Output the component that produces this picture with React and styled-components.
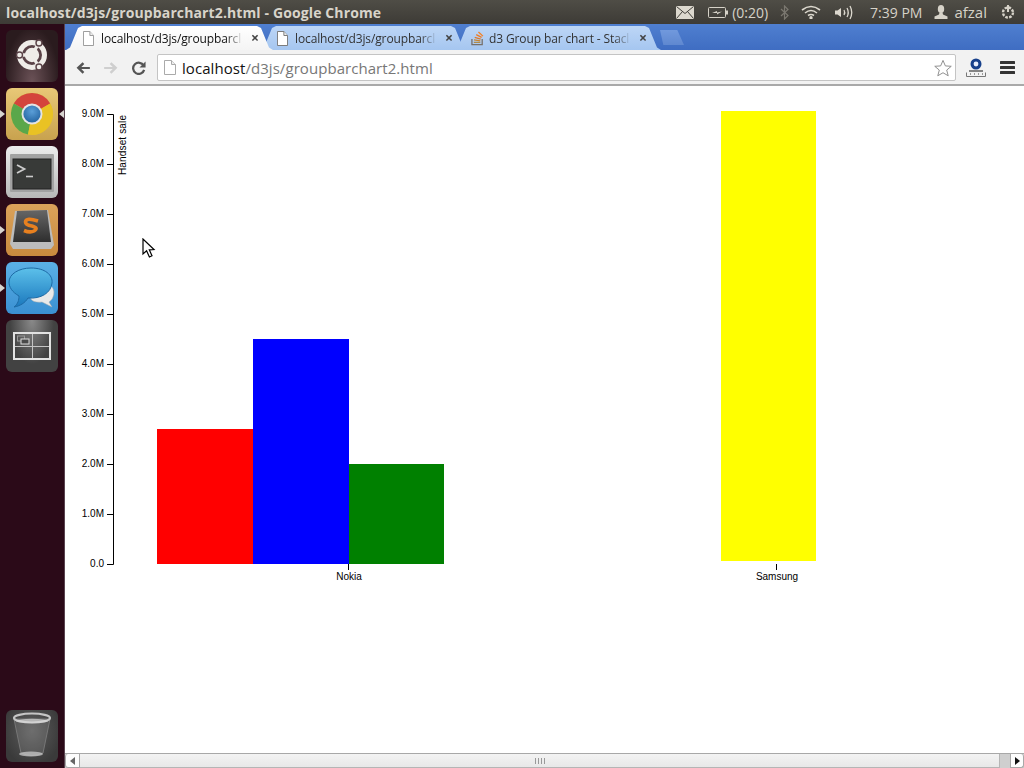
import React from 'react';
import styled, { createGlobalStyle } from 'styled-components';

const GlobalStyle = createGlobalStyle`
    html, body { margin: 0; padding: 0; overflow: hidden; background: #fff; }
    #root { width: 1024px; height: 768px; }
`;

const uiFont = `"Open Sans", "Noto Sans", "DejaVu Sans", sans-serif`;

const Desktop = styled.div`
    width: 1024px;
    height: 768px;
    display: flex;
    flex-direction: column;
    overflow: hidden;
    font-family: ${uiFont};
`;

const TopBar = styled.div`
    height: 24px;
    flex: none;
    display: flex;
    align-items: center;
    padding-left: 6px;
    background: linear-gradient(#4f4d46, #3d3b36);
    color: #dfdbd2;
`;

const WindowTitle = styled.div`
    font-size: 14px;
    font-weight: 700;
    letter-spacing: 0.12px;
    white-space: nowrap;
    color: #d8d4ca;
`;

const Indicators = styled.div`
    margin-left: auto;
    display: flex;
    align-items: center;
    height: 24px;
`;

const Indicator = styled.span`
    display: flex;
    align-items: center;
    margin-left: ${p => p.$gap}px;
    font-size: ${p => p.$size || 15}px;
    color: #d6d2c8;
    white-space: nowrap;
`;

const Main = styled.div`
    flex: 1;
    display: flex;
    min-height: 0;
`;

const Launcher = styled.div`
    width: 65px;
    flex: none;
    display: flex;
    flex-direction: column;
    gap: 6px;
    padding: 6px 0 6px 6px;
    box-sizing: border-box;
    background: #2b0a18;
    border-right: 1px solid #5a4450;
`;

const Tile = styled.div`
    position: relative;
    width: 52px;
    height: 52px;
    border-radius: 6px;
    background: ${p => p.$bg};
    margin-top: ${p => p.$push ? 'auto' : '0'};
    svg { display: block; }
`;

const Pip = styled.span`
    position: absolute;
    top: 22px;
    width: 0;
    height: 0;
    border-top: 4px solid transparent;
    border-bottom: 4px solid transparent;
    ${p => p.$right
        ? `left: 53px; border-right: 5px solid #d8d4d0;`
        : `left: -6px; border-left: 5px solid #d8d4d0;`}
`;

const Browser = styled.div`
    flex: 1;
    display: flex;
    flex-direction: column;
    min-width: 0;
`;

const TabStrip = styled.div`
    height: 26px;
    flex: none;
    display: flex;
    align-items: flex-end;
    padding-left: 1px;
    background: linear-gradient(#4f7fd0, #3f6dc2);
    filter: drop-shadow(0 0 0.6px #24457f);
`;

const Tab = styled.div`
    width: 207px;
    height: 24px;
    margin-right: -13px;
    flex: none;
    display: flex;
    align-items: center;
    box-sizing: border-box;
    padding: 0 14px 0 17px;
    font-size: 12px;
    position: relative;
    z-index: ${p => p.$active ? 2 : 1};
    color: ${p => p.$active ? '#111' : '#333'};
    background: ${p => p.$active
        ? 'linear-gradient(#ffffff, #f4f4f4)'
        : 'linear-gradient(#bdd6f6, #a5c6f0)'};
    clip-path: polygon(0 100%, 4px 90%, 12px 8%, 16px 0, calc(100% - 16px) 0, calc(100% - 12px) 8%, calc(100% - 4px) 90%, 100% 100%);
`;

const TabLabel = styled.span`
    flex: 1;
    min-width: 0;
    margin-left: ${p => p.$gap}px;
    letter-spacing: -0.12px;
    white-space: nowrap;
    overflow: hidden;
    mask-image: linear-gradient(to right, #000 88%, transparent);
`;

const TabClose = styled.span`
    flex: none;
    margin-left: 8px;
    font-size: 14px;
    font-weight: 700;
    line-height: 1;
    color: #444;
`;

const NewTab = styled.div`
    width: 24px;
    height: 15px;
    margin: 0 0 5px 12px;
    flex: none;
    background: linear-gradient(#7199dd, #5f88d0);
    clip-path: polygon(0 0, 72% 0, 100% 100%, 14% 100%);
`;

const Toolbar = styled.div`
    height: 36px;
    flex: none;
    display: flex;
    align-items: center;
    box-sizing: border-box;
    background: #f2f2f2;
    border-bottom: 2px solid #a9a9a9;
    padding: 1px 0 0 4px;
`;

const NavButton = styled.span`
    width: 28px;
    height: 24px;
    flex: none;
    display: flex;
    align-items: center;
    justify-content: center;
`;

const Omnibox = styled.div`
    width: 799px;
    height: 27px;
    margin-left: 4px;
    flex: none;
    display: flex;
    align-items: center;
    box-sizing: border-box;
    padding: 0 3px 0 6px;
    background: #fff;
    border: 1px solid #c4c4c4;
    border-radius: 2px;
    font-size: 15px;
    letter-spacing: 0.06px;
    white-space: nowrap;
    color: #777;
`;

const Host = styled.span`
    color: #111;
    margin-left: 6px;
`;

const StarSlot = styled.span`
    margin-left: auto;
    display: flex;
`;

const ToolButton = styled.span`
    display: flex;
    margin-left: ${p => p.$gap}px;
`;

const Page = styled.div`
    flex: 1;
    background: #fff;
    position: relative;
    min-height: 0;
`;

const Chart = styled.svg`
    display: block;
    width: 959px;
    height: 667px;
    text {
        font-family: "Liberation Sans", Arial, sans-serif;
        font-size: 10px;
        fill: #000;
    }
`;

const Pointer = styled.svg`
    position: absolute;
    left: 77px;
    top: 152px;
`;

const Scrollbar = styled.div`
    height: 15px;
    flex: none;
    display: flex;
    box-sizing: border-box;
    background: #cfcfcf;
    border-top: 1px solid #a8a8a8;
`;

const ScrollButton = styled.div`
    width: ${p => p.$right ? 14 : 15}px;
    flex: none;
    display: flex;
    align-items: center;
    justify-content: center;
    background: #fdfdfd;
    border: 1px solid #a8a8a8;
    border-top: 0;
    box-sizing: border-box;
    border-radius: ${p => p.$right ? '0 3px 3px 0' : '3px 0 0 3px'};
`;

const Arrow = styled.span`
    width: 0;
    height: 0;
    border-top: 4px solid transparent;
    border-bottom: 4px solid transparent;
    ${p => p.$right ? 'border-left: 5px solid #111;' : 'border-right: 5px solid #666;'}
`;

const Thumb = styled.div`
    width: 920px;
    flex: none;
    display: flex;
    align-items: center;
    justify-content: center;
    gap: 2px;
    box-sizing: border-box;
    background: linear-gradient(#f3f3f3, #e8e8e8);
    border-right: 1px solid #b5b5b5;
    border-bottom: 1px solid #b5b5b5;
`;

const Grip = styled.i`
    width: 1px;
    height: 6px;
    background: #999;
`;

const Track = styled.div`
    flex: 1;
    background: #cfcfcf;
`;

const MailIcon = () => (
    <svg width="18" height="13" viewBox="0 0 18 13" fill="none" stroke="#3f3d38">
        <rect x="0" y="0" width="18" height="13" fill="#dcd8ce" stroke="none" />
        <path d="M0.5 0.5 L9 7.5 L17.5 0.5 M0.5 12.5 L6.5 5.5 M17.5 12.5 L11.5 5.5" />
    </svg>
);

const BatteryIcon = () => (
    <svg width="20" height="11" viewBox="0 0 20 11" fill="none">
        <rect x="0.5" y="0.5" width="17" height="10" rx="1" stroke="#d6d2c8" />
        <rect x="18" y="3.5" width="2" height="4" fill="#d6d2c8" />
        <path d="M4 6 L9 4 L9 5.5 L14 4.5 L9 7.5 L9 6 Z" fill="#d6d2c8" />
    </svg>
);

const BluetoothIcon = () => (
    <svg width="9" height="15" viewBox="0 0 9 15" fill="none" stroke="#7b7870" strokeWidth="1.2">
        <path d="M1 4 L8 10.5 L4.5 14 L4.5 1 L8 4.5 L1 11" />
    </svg>
);

const WifiIcon = () => (
    <svg width="20" height="14" viewBox="0 0 20 14" fill="none" stroke="#dcd8ce" strokeWidth="1.6">
        <path d="M1 5 Q10 -2 19 5" />
        <path d="M4 8 Q10 3 16 8" />
        <path d="M7 10.5 Q10 8.5 13 10.5" />
        <circle cx="10" cy="12.7" r="0.9" fill="#dcd8ce" />
    </svg>
);

const VolumeIcon = () => (
    <svg width="20" height="15" viewBox="0 0 20 15" fill="none" stroke="#dcd8ce" strokeWidth="1.3">
        <path d="M1 5.5 H3.5 L7 3 V12 L3.5 9.5 H1 Z" fill="#dcd8ce" stroke="none" />
        <path d="M10 5 Q11.5 7.5 10 10" />
        <path d="M13 3 Q15.5 7.5 13 12" />
        <path d="M16 1 Q19.5 7.5 16 14" />
    </svg>
);

const UserIcon = () => (
    <svg width="14" height="14" viewBox="0 0 14 14" fill="#d6d2c8">
        <ellipse cx="7" cy="4" rx="3.2" ry="4" />
        <path d="M5.5 7.5 H8.5 L9 9.5 L13.5 11.5 V14 H0.5 V11.5 L5 9.5 Z" />
    </svg>
);

const PowerIcon = () => (
    <svg width="16" height="16" viewBox="0 0 16 16" fill="none" stroke="#d6d2c8">
        <circle cx="8" cy="8.5" r="5" strokeWidth="2.4" strokeDasharray="2.6 1.3" />
        <path d="M8 1 V8" strokeWidth="2" />
    </svg>
);

const PageIcon = ({ color = '#999', width = 11 }) => (
    <svg width={width} height="15" viewBox="0 0 12 15" fill="#fff" stroke={color} preserveAspectRatio="none">
        <path d="M0.5 0.5 H7.5 L11.5 4.5 V14.5 H0.5 Z" />
        <path d="M7.5 0.5 V4.5 H11.5" fill="#eee" />
    </svg>
);

const StackIcon = () => (
    <svg width="14" height="16" viewBox="0 0 15 16" fill="none">
        <path d="M1 9 V15 H12 V9" stroke="#77706a" strokeWidth="1.4" />
        <path d="M3 12.7 H10" stroke="#b08b4a" strokeWidth="1.4" />
        <path d="M3.2 10 L10 11" stroke="#c9852f" strokeWidth="1.4" />
        <path d="M4 7.4 L10.4 9.2" stroke="#e0792a" strokeWidth="1.4" />
        <path d="M5.6 4.4 L11.4 7.4" stroke="#ef7b22" strokeWidth="1.4" />
        <path d="M8 1.5 L12.8 6" stroke="#f48024" strokeWidth="1.4" />
    </svg>
);

const BackIcon = ({ color }) => (
    <svg width="14" height="12" viewBox="0 0 16 14" fill={color}>
        <path d="M7.5 0.5 L9.5 2.5 L6 6 H16 V8.5 H6 L9.5 12 L7.5 14 L0.5 7 Z" transform="translate(0 -0.2)" />
    </svg>
);

const ForwardIcon = ({ color }) => (
    <svg width="14" height="12" viewBox="0 0 16 14" fill={color}>
        <path d="M8.5 0.5 L6.5 2.5 L10 6 H0 V8.5 H10 L6.5 12 L8.5 14 L15.5 7 Z" transform="translate(0 -0.2)" />
    </svg>
);

const ReloadIcon = () => (
    <svg width="14" height="14" viewBox="0 0 15 15" fill="none">
        <path d="M12.5 5 A6 6 0 1 0 13 9.5" stroke="#555" strokeWidth="2.4" />
        <path d="M14.5 0.5 V7 H8 Z" fill="#555" />
    </svg>
);

const StarIcon = () => (
    <svg width="18" height="18" viewBox="0 0 19 18" fill="#fff" stroke="#8a8a8a">
        <path d="M9.5 1 L12 6.8 L18.2 7.2 L13.4 11.2 L15 17.2 L9.5 14 L4 17.2 L5.6 11.2 L0.8 7.2 L7 6.8 Z" />
    </svg>
);

const RulerExtension = () => (
    <svg width="20" height="19" viewBox="0 0 20 19" fill="none">
        <circle cx="10" cy="6" r="5.5" fill="#17408b" />
        <circle cx="10" cy="6" r="2.4" fill="#e8eefc" />
        <path d="M3 13 H17" stroke="#555" strokeWidth="1.4" />
        <path d="M0.5 14.5 V18.5 H19.5 V14.5" stroke="#777" />
        <path d="M4.5 15 V17 M8.5 15 V17 M12.5 15 V17 M16.5 15 V17" stroke="#999" />
    </svg>
);

const MenuIcon = () => (
    <svg width="15" height="13" viewBox="0 0 15 13" fill="#333">
        <rect y="0" width="15" height="3" rx="0.5" />
        <rect y="5" width="15" height="3" rx="0.5" />
        <rect y="10" width="15" height="3" rx="0.5" />
    </svg>
);

const UbuntuLogo = () => (
    <svg width="52" height="52" viewBox="0 0 52 52">
        <circle cx="26" cy="25" r="15" fill="#efece8" />
        <circle cx="26" cy="25" r="8.6" fill="none" stroke="#5a4247" strokeWidth="2.8" />
        <g stroke="#efece8" strokeWidth="3.4">
            <path d="M26 25 L34 11" />
            <path d="M26 25 L10 25" />
            <path d="M26 25 L34 39" />
        </g>
        <circle cx="33" cy="13" r="3" fill="#efece8" stroke="#5a4247" strokeWidth="1.4" />
        <circle cx="13.5" cy="25" r="3" fill="#efece8" stroke="#5a4247" strokeWidth="1.4" />
        <circle cx="33" cy="37" r="3" fill="#efece8" stroke="#5a4247" strokeWidth="1.4" />
    </svg>
);

const ChromeLogo = () => (
    <svg width="52" height="52" viewBox="0 0 52 52">
        <defs>
            <radialGradient id="chromeCore" cx="50%" cy="35%" r="70%">
                <stop offset="0%" stopColor="#5b9fd8" />
                <stop offset="100%" stopColor="#22629f" />
            </radialGradient>
        </defs>
        <circle cx="26" cy="26" r="21" fill="#d9b93a" />
        <path d="M26 26 L7.8 15.5 A21 21 0 0 1 44.2 15.5 Z" fill="#d4443c" />
        <path d="M26 26 L7.8 15.5 A21 21 0 0 0 22 46.6 Z" fill="#5aa74a" />
        <path d="M26 26 L44.2 15.5 A21 21 0 0 1 22 46.6 Z" fill="#e9c224" />
        <circle cx="26" cy="26" r="10.5" fill="#e4e4e4" />
        <circle cx="26" cy="26" r="8.6" fill="url(#chromeCore)" />
    </svg>
);

const TerminalLogo = () => (
    <svg width="52" height="52" viewBox="0 0 52 52">
        <rect x="4" y="8" width="44" height="38" rx="1" fill="#a2a2a2" />
        <rect x="7" y="13" width="38" height="30" fill="#383a38" stroke="#222" />
        <path d="M11 19 L18.5 23 L11 27" fill="none" stroke="#ccc" strokeWidth="1.8" />
        <path d="M20 30.5 H27" stroke="#ccc" strokeWidth="1.6" />
    </svg>
);

const SublimeLogo = () => (
    <svg width="52" height="52" viewBox="0 0 52 52">
        <defs>
            <linearGradient id="sublimeBox" x1="0" y1="0" x2="0" y2="1">
                <stop offset="0%" stopColor="#666" />
                <stop offset="100%" stopColor="#2e2e2e" />
            </linearGradient>
        </defs>
        <path d="M4 40 L9 7 L42 6 L48 41 L45 45 H7 Z" fill="#bcbcbc" />
        <path d="M7 38 L11 7 L41 6 L45 38 Z" fill="url(#sublimeBox)" />
        <path d="M32 17 Q20 13 19.5 18 Q19.5 21 26 22 Q33 24 28 27 Q24 29 18 26.5" fill="none" stroke="#e8801f" strokeWidth="3.6" />
    </svg>
);

const ChatLogo = () => (
    <svg width="52" height="52" viewBox="0 0 52 52">
        <defs>
            <linearGradient id="chatBubble" x1="0" y1="0" x2="0" y2="1">
                <stop offset="0%" stopColor="#5cc0ea" />
                <stop offset="100%" stopColor="#1b78bd" />
            </linearGradient>
        </defs>
        <path d="M34 22 C46 20 50 28 47 35 C46 38 44 39 43 40 L46 45 L36 40 C28 41 24 38 24 34 Z" fill="#e9e9e9" stroke="#aaa" strokeWidth="0.5" />
        <path d="M25 6 C39 6 47 13 46 21 C45 31 35 37 22 36 C19 41 14 44 8 45 C12 42 13 38 13 34 C6 30 3 25 3 20 C3 12 13 6 25 6 Z" fill="url(#chatBubble)" stroke="#1d6aa5" />
    </svg>
);

const WorkspaceLogo = () => (
    <svg width="52" height="52" viewBox="0 0 52 52">
        <rect x="8" y="13" width="36" height="26" fill="none" stroke="#e2e2e2" strokeWidth="2" />
        <path d="M26.5 14 V38 M9 26.5 H43" stroke="#c4c4c4" strokeWidth="1" />
        <rect x="11.5" y="16" width="7" height="5" fill="none" stroke="#999" />
        <rect x="15" y="19" width="8" height="5" fill="#4a4a4a" stroke="#ddd" />
    </svg>
);

const TrashLogo = () => (
    <svg width="52" height="52" viewBox="0 0 52 52">
        <path d="M8 9 L15 43 Q26 48 37 43 L44 9 Z" fill="rgba(255,255,255,0.1)" stroke="#777" />
        <ellipse cx="26" cy="8" rx="18" ry="4.5" fill="none" stroke="#c4c4c4" strokeWidth="2.2" />
        <ellipse cx="26" cy="11" rx="16" ry="2.2" fill="#d8d8d8" opacity="0.7" />
        <ellipse cx="25" cy="44" rx="12" ry="2.6" fill="#c9c9c9" opacity="0.75" />
    </svg>
);

const yTicks = ['0.0', '1.0M', '2.0M', '3.0M', '4.0M', '5.0M', '6.0M', '7.0M', '8.0M', '9.0M'];

const bars = [
    { x: 157, y: 429, w: 96, h: 135, fill: '#ff0000' },
    { x: 253, y: 339, w: 96, h: 225, fill: '#0000ff' },
    { x: 349, y: 464, w: 95, h: 100, fill: '#008000' },
    { x: 721, y: 111, w: 95, h: 450, fill: '#ffff00' },
];

const xTicks = [
    { x: 349, label: 'Nokia' },
    { x: 777, label: 'Samsung' },
];

const tabs = [
    { label: 'localhost/d3js/groupbarcl', active: true, icon: <PageIcon />, gap: 7 },
    { label: 'localhost/d3js/groupbarcl', icon: <PageIcon color="#777" />, gap: 7 },
    { label: 'd3 Group bar chart - Stacl', icon: <StackIcon />, gap: 4 },
];

const dockItems = [
    { name: 'chrome', bg: 'linear-gradient(#e8c877, #c8a24e)', logo: <ChromeLogo />, left: true, right: true },
    { name: 'terminal', bg: 'linear-gradient(#ececec, #b8b8b8)', logo: <TerminalLogo /> },
    { name: 'sublime', bg: 'linear-gradient(#dba25a, #c98a3e)', logo: <SublimeLogo />, left: true },
    { name: 'chat', bg: 'linear-gradient(#5bb0e6, #3a90d2)', logo: <ChatLogo />, left: true },
    { name: 'workspaces', bg: 'radial-gradient(ellipse at 50% 0, #8a8a8a, #424242 60%)', logo: <WorkspaceLogo /> },
];

const App = () => {
    return (
        <>
            <GlobalStyle />
            <Desktop>
                <TopBar>
                    <WindowTitle>localhost/d3js/groupbarchart2.html - Google Chrome</WindowTitle>
                    <Indicators>
                        <Indicator $gap={0}><MailIcon /></Indicator>
                        <Indicator $gap={14}><BatteryIcon /></Indicator>
                        <Indicator $gap={4} $size={14}>(0:20)</Indicator>
                        <Indicator $gap={12}><BluetoothIcon /></Indicator>
                        <Indicator $gap={12}><WifiIcon /></Indicator>
                        <Indicator $gap={13}><VolumeIcon /></Indicator>
                        <Indicator $gap={16} $size={14}>7:39 PM</Indicator>
                        <Indicator $gap={12}><UserIcon /></Indicator>
                        <Indicator $gap={6} $size={15}>afzal</Indicator>
                        <Indicator $gap={13}><PowerIcon /></Indicator>
                        <Indicator $gap={8} />
                    </Indicators>
                </TopBar>
                <Main>
                    <Launcher>
                        <Tile $bg="radial-gradient(ellipse at 50% 100%, #6b5257, #2a1b1e 75%)"><UbuntuLogo /></Tile>
                        {dockItems.map(item => (
                            <Tile key={item.name} $bg={item.bg}>
                                {item.left && <Pip />}
                                {item.right && <Pip $right />}
                                {item.logo}
                            </Tile>
                        ))}
                        <Tile $push $bg="radial-gradient(ellipse at 50% 40%, #5e5e5e, #3a3a3a 80%)"><TrashLogo /></Tile>
                    </Launcher>
                    <Browser>
                        <TabStrip>
                            {tabs.map((tab, i) => (
                                <Tab key={i} $active={tab.active}>
                                    {tab.icon}
                                    <TabLabel $gap={tab.gap}>{tab.label}</TabLabel>
                                    <TabClose>×</TabClose>
                                </Tab>
                            ))}
                            <NewTab />
                        </TabStrip>
                        <Toolbar>
                            <NavButton><BackIcon color="#555" /></NavButton>
                            <NavButton><ForwardIcon color="#cfcfcf" /></NavButton>
                            <NavButton><ReloadIcon /></NavButton>
                            <Omnibox>
                                <PageIcon color="#aaa" width={12} />
                                <Host>localhost</Host>/d3js/groupbarchart2.html
                                <StarSlot><StarIcon /></StarSlot>
                            </Omnibox>
                            <ToolButton $gap={10}><RulerExtension /></ToolButton>
                            <ToolButton $gap={14}><MenuIcon /></ToolButton>
                        </Toolbar>
                        <Page>
                            <Chart viewBox="65 86 959 667">
                                {bars.map(b => (
                                    <rect key={b.x} x={b.x} y={b.y} width={b.w} height={b.h} fill={b.fill} />
                                ))}
                                <path d="M107 114.5 H113.5 V564.5 H107" fill="none" stroke="#000" />
                                {yTicks.map((t, i) => (
                                    <g key={t}>
                                        <line x1="107" x2="113" y1={564.5 - i * 50} y2={564.5 - i * 50} stroke="#000" />
                                        <text x="104" y={567 - i * 50} textAnchor="end">{t}</text>
                                    </g>
                                ))}
                                <text transform="translate(126 175) rotate(-90)" letterSpacing="0.15">Handset sale</text>
                                {xTicks.map(t => (
                                    <g key={t.label}>
                                        <line x1={t.x - 0.5} x2={t.x - 0.5} y1="564" y2="570" stroke="#000" />
                                        <text x={t.x} y="580" textAnchor="middle">{t.label}</text>
                                    </g>
                                ))}
                            </Chart>
                            <Pointer width="14" height="20" viewBox="0 0 14 20">
                                <path d="M1 1 V16 L4.6 12.8 L7.4 19 L10 17.8 L7.3 11.8 L12 11.5 Z" fill="#fff" stroke="#000" strokeWidth="1.2" />
                            </Pointer>
                        </Page>
                        <Scrollbar>
                            <ScrollButton><Arrow /></ScrollButton>
                            <Thumb><Grip /><Grip /><Grip /><Grip /></Thumb>
                            <Track />
                            <ScrollButton $right><Arrow $right /></ScrollButton>
                        </Scrollbar>
                    </Browser>
                </Main>
            </Desktop>
        </>
    );
};

export default App;
